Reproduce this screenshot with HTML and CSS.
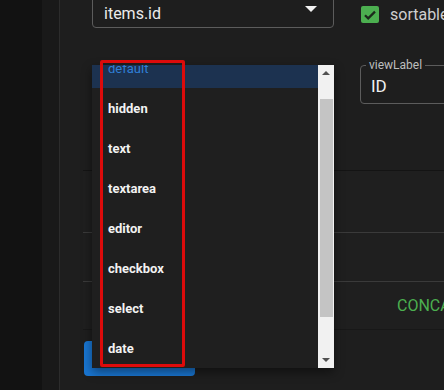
FILE: index.html
```html
<!DOCTYPE html>
<html lang="en">
<head>
  <meta charset="UTF-8">
  <meta name="viewport" content="width=device-width, initial-scale=1.0">
  <title>Column editor</title>
  <link rel="stylesheet" href="styles.css">
</head>
<body>

  <div class="app">
    <div class="rail"></div>
    <div class="drawer"></div>

    <div class="main">
      <div class="form">
        <div class="row row-top">
          <div class="select">
            <span class="select-value">items.id</span>
            <svg class="caret" width="12" height="6" viewBox="0 0 12 6"><path d="M0 0h12L6 6z" fill="#f2f2f2"/></svg>
          </div>
          <div class="check">
            <span class="check-box">
              <svg width="18" height="18" viewBox="0 0 18 18"><path d="M4 9.2l3.2 3.2L14 5.6" fill="none" stroke="#1b2a1b" stroke-width="2.2"/></svg>
            </span>
            <span class="check-label">sortable</span>
          </div>
        </div>

        <div class="row row-fields">
          <div class="select select-type"></div>
          <div class="outlined">
            <span class="legend">viewLabel</span>
            <span class="outlined-value">ID</span>
          </div>
        </div>
      </div>

      <div class="card">
        <div class="card-row row-a"></div>
        <div class="card-row row-b"></div>
        <div class="card-row row-c"><span class="link">CONCAT</span></div>
      </div>

      <!-- label sits under the open menu -->
      <button class="btn-save" aria-label="Save"></button>
    </div>
  </div>

  <!-- open dropdown of the type select -->
  <div class="menu">
    <ul class="menu-list">
      <li class="selected">default</li>
      <li>hidden</li>
      <li>text</li>
      <li>textarea</li>
      <li>editor</li>
      <li>checkbox</li>
      <li>select</li>
      <li>date</li>
    </ul>
    <div class="scrollbar">
      <div class="scroll-btn">
        <svg width="8" height="4" viewBox="0 0 8 4"><path d="M0 4L4 0l4 4z" fill="#505050"/></svg>
      </div>
      <div class="scroll-track"><div class="scroll-thumb"></div></div>
      <div class="scroll-btn">
        <svg width="8" height="4" viewBox="0 0 8 4"><path d="M0 0h8L4 4z" fill="#505050"/></svg>
      </div>
    </div>
  </div>

  <div class="highlight"></div>

</body>
</html>
```

FILE: styles.css
```css
* {
  margin: 0;
  padding: 0;
  box-sizing: border-box;
}
body {
  font-family: Roboto, 'Noto Sans', sans-serif;
  background-color: #1e1e1e;
  color: #eee;
  width: 444px;
  height: 390px;
  overflow: hidden;
  position: relative;
}
.app {
  display: flex;
  height: 390px;
}
.rail {
  width: 42px;
  background-color: #121212;
}
.drawer {
  width: 18px;
  background-color: #191919;
  border-right: 1px solid #2c2c2c;
}
.main {
  flex: 1;
  min-width: 0;
  overflow: hidden;
  background-color: #1e1e1e;
}
.form {
  padding-left: 32px;
}
.row {
  display: flex;
  align-items: flex-start;
}
.select {
  width: 242px;
  flex-shrink: 0;
  border: 1px solid #5c5c5c;
  border-radius: 4px;
  display: flex;
  align-items: center;
  justify-content: space-between;
  padding: 0 16px 0 11px;
}
.row-top .select {
  height: 44px;
  margin-top: -16px;
  padding-top: 14px;
}
.select-value {
  font-size: 16px;
  color: #ececec;
}
.caret {
  margin-bottom: 8px;
}
.check {
  display: flex;
  align-items: center;
  flex-shrink: 0;
  margin-left: 27px;
  margin-top: 5px;
  gap: 11px;
}
.check-box {
  width: 18px;
  height: 17px;
  background-color: #4caf50;
  border-radius: 2px;
  display: flex;
  align-items: center;
  justify-content: center;
}
.check-label {
  font-size: 16px;
  color: #cfcfcf;
  white-space: nowrap;
}
.row-fields {
  margin-top: 37px;
}
.select-type {
  height: 39px;
}
.outlined {
  position: relative;
  flex-shrink: 0;
  margin-left: 26px;
  width: 260px;
  height: 39px;
  border: 1px solid #5c5c5c;
  border-radius: 4px;
  padding: 10px 0 0 10px;
}
.legend {
  position: absolute;
  top: -8px;
  left: 5px;
  padding: 0 3px;
  font-size: 12px;
  color: #bdbdbd;
  background-color: #1e1e1e;
}
.outlined-value {
  font-size: 17px;
  color: #f0f0f0;
}
.card {
  margin: 66px 0 0 23px;
  border-top: 1px solid #141414;
  background-color: #1f1f1f;
}
.card-row {
  border-bottom: 1px solid #3a3a3a;
}
.row-a {
  height: 62px;
}
.row-b {
  height: 49px;
}
.row-c {
  height: 48px;
  border-bottom: 1px solid #181818;
  display: flex;
  align-items: center;
  padding-left: 314px;
}
.link {
  font-size: 16px;
  color: #4caf50;
  white-space: nowrap;
}
.btn-save {
  display: block;
  margin: 11px 0 0 24px;
  width: 111px;
  height: 35px;
  border: none;
  border-radius: 4px;
  background-color: #1976d2;
}
.menu {
  position: absolute;
  left: 92px;
  top: 65px;
  width: 242px;
  height: 303px;
  display: flex;
  background-color: #1f1f1f;
  box-shadow: 0 4px 10px rgba(0,0,0,0.45);
  overflow: hidden;
}
.menu-list {
  flex: 1;
  list-style: none;
  margin-top: -17px;
}
.menu-list li {
  height: 40px;
  padding-left: 16px;
  display: flex;
  align-items: center;
  font-size: 13px;
  font-weight: 700;
  color: #f2f2f2;
}
.menu-list li.selected {
  background-color: #1c3250;
  color: #2f7fd6;
  font-weight: 400;
}
.scrollbar {
  width: 16px;
  background-color: #f1f1f1;
  display: flex;
  flex-direction: column;
}
.scroll-btn {
  height: 16px;
  display: flex;
  align-items: center;
  justify-content: center;
}
.scroll-track {
  flex: 1;
  padding: 18px 1px 0 2px;
}
.scroll-thumb {
  height: 218px;
  background-color: #c4c4c4;
}
.highlight {
  position: absolute;
  left: 100px;
  top: 60px;
  width: 85px;
  height: 307px;
  border: 3px solid #dc0b0b;
  border-radius: 2px;
}
```
